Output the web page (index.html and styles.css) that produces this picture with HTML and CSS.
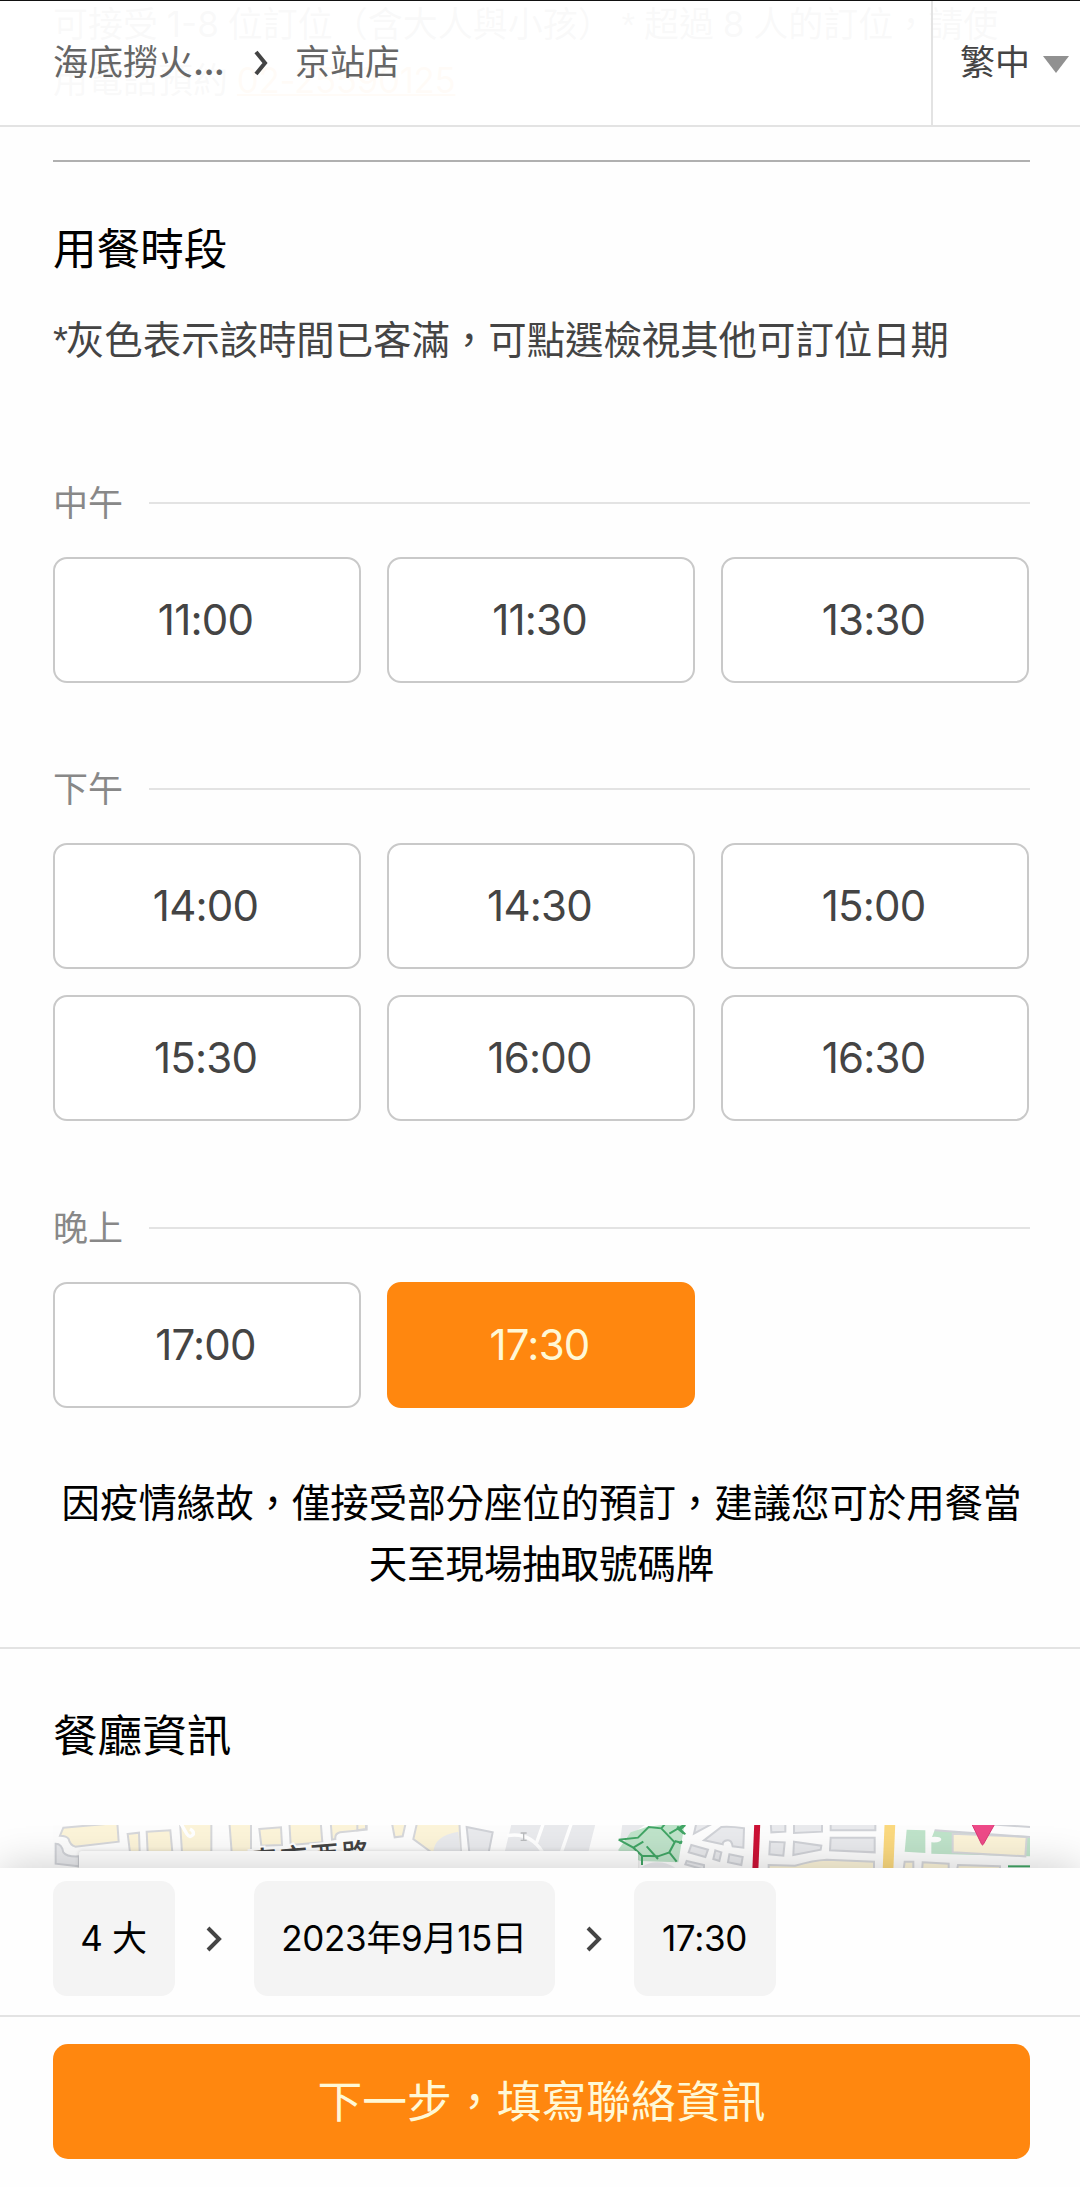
FILE: index.html
```html
<!DOCTYPE html>
<html lang="zh-Hant">
<head>
<meta charset="utf-8">
<title>海底撈火鍋 京站店</title>
<link rel="stylesheet" href="styles.css">
</head>
<body>
<div class="page">
  <p class="policy">可接受 1-8 位訂位（含大人與小孩） <span class="star">*</span> 超過 8 人的訂位，請使用電話預約 <a class="tel">02-25590125</a></p>
  <header class="topbar">
    <nav class="crumbs">
      <span class="crumb brand">海底撈火<b class="dots">...</b></span>
      <svg class="crumb-arrow" viewBox="0 0 14 26"><path d="M2 2L11 13L2 24"/></svg>
      <span class="crumb">京站店</span>
    </nav>
    <div class="lang"><span>繁中</span><i class="caret"></i></div>
  </header>
  <main class="content">
    <section class="times">
      <h2 class="title">用餐時段</h2>
      <p class="hint"><span class="star">*</span>灰色表示該時間已客滿，可點選檢視其他可訂位日期</p>
      <div class="period first">
        <h3 class="label"><span>中午</span></h3>
        <div class="slots"><button class="slot">11:00</button><button class="slot">11:30</button><button class="slot">13:30</button></div>
      </div>
      <div class="period">
        <h3 class="label"><span>下午</span></h3>
        <div class="slots"><button class="slot">14:00</button><button class="slot">14:30</button><button class="slot">15:00</button><button class="slot">15:30</button><button class="slot">16:00</button><button class="slot">16:30</button></div>
      </div>
      <div class="period last">
        <h3 class="label"><span>晚上</span></h3>
        <div class="slots"><button class="slot">17:00</button><button class="slot selected">17:30</button></div>
      </div>
      <p class="notice">因疫情緣故，僅接受部分座位的預訂，建議您可於用餐當天至現場抽取號碼牌</p>
    </section>
    <section class="info">
      <h2 class="title">餐廳資訊</h2>
      <div class="map">
        <svg class="tiles" viewBox="0 0 2931 129">
          <g transform="translate(-39 -30)">
            <g class="shop">
              <path d="M70 38L232 24L236 80L106 95Q90 90 86 72Q80 62 60 62Z"/>
              <path d="M263 57L297 53L299 112H270Z"/>
              <path d="M320 50L391 46L397 112H323Z"/>
              <path d="M420 20H514V112H426Z"/>
              <path d="M568 20H633V112H575Z"/>
              <path d="M658 42L723 37L726 90L664 92Z"/>
              <path d="M748 20H842L847 82L752 90Z"/>
              <path d="M872 20H980V44L900 52Q884 56 886 72L876 74Z"/>
            </g>
            <path class="block" d="M47 86Q66 86 70 112Q80 126 117 124V154L47 146Z"/>
            <path class="lane" d="M424 28L440 56Q450 72 460 58Q462 48 450 42"/>
            <text class="road-name" transform="translate(630 172) rotate(-4.6)">南京西路</text>
          </g>
          <g transform="translate(921 -30)">
            <g class="shop"><path d="M-8 20H18V42L-8 46Z"/><path d="M95 20H138L128 64L104 67Z"/><path d="M172 20H298L303 112H214L160 72Z"/></g>
            <path class="block plain" d="M295 50Q222 62 220 112H302Z"/>
            <path class="block" d="M320 36L398 52L386 112H328Z"/>
            <path class="block plain" d="M456 20H708L685 112H434Z"/>
            <path class="lane" d="M636 20L604 112M552 20L530 82M442 62Q510 50 548 112"/>
            <path class="walk" d="M482 54H500M482 76H500M491 54V76"/>
            <path class="block plain" d="M788 20H870L780 80Z"/>
            <path class="park" d="M812 52L860 36L975 20L955 142L840 138L774 106Z"/>
            <path class="trail" d="M776 74L834 68L866 36L904 40L944 82L928 112L894 124L846 122L820 98L776 74M820 98L850 80M860 94L894 132M904 40L914 28M928 56L972 30M950 38L972 56M944 78L966 84M928 112L950 140M846 122V150"/>
            <path class="block plain" d="M842 158Q890 126 946 158Z"/>
          </g>
          <g transform="translate(1881 -30)">
            <path class="trail" d="M-8 34L16 58M16 30L0 44M-2 86L6 78"/>
            <g class="block"><path d="M50 20H108L42 56Z"/><path d="M72 76L124 36Q155 34 192 40L190 98L158 94Q155 74 142 76Q128 78 128 88Z"/><path d="M34 90L84 104L76 126L26 112Z"/><path d="M106 106L124 112L118 138L100 132Z"/><path d="M148 118L188 126L184 150L144 142Z"/><path d="M20 138L72 150V164L16 148Z"/><path d="M272 20H316V50L274 52Z"/><path d="M342 20H426V50L342 54Z"/><path d="M452 20H586V46H452Z"/><path d="M270 80L314 82L310 122L268 118Z"/><path d="M342 80L424 92L422 104L340 120Z"/><path d="M452 68H584V112L450 106Z"/></g>
            <path class="metro" d="M232 20L226 165"/>
            <path class="artery" d="M630 20L624 165"/>
            <g class="shop"><path d="M266 150L345 152Q400 136 440 134L582 140V170H266Z"/><path d="M674 140H700V170H670Z"/><path d="M728 142L806 146V170H726Z"/><path d="M834 150L960 154V170H830Z"/></g>
            <path class="park" d="M680 44L736 46V114L674 110ZM764 46L1050 68V124L754 116V82Q784 84 784 72Q780 64 756 66Z"/>
            <path class="shop" d="M818 56L1040 66L1036 124L818 112Z"/>
            <path class="edge" d="M930 28L1050 36M764 46L1050 66"/>
            <path class="trail" d="M984 154H1050"/>
            <path class="pin" d="M874 24H946L910 88Q908 92 905 88Z"/>
          </g>
        </svg>
        <div class="map-card"></div>
      </div>
    </section>
  </main>
  <footer class="bottombar">
    <div class="summary">
      <span class="chip party">4 大</span>
      <svg class="step" viewBox="0 0 16 26"><path d="M2 2L13 13L2 24"/></svg>
      <span class="chip date">2023年9月15日</span>
      <svg class="step" viewBox="0 0 16 26"><path d="M2 2L13 13L2 24"/></svg>
      <span class="chip time">17:30</span>
    </div>
    <div class="action"><button class="next">下一步，填寫聯絡資訊</button></div>
  </footer>
</div>
</body>
</html>
```
FILE: styles.css
```css
* { box-sizing: border-box; margin: 0; padding: 0; }
body { background: #fefefe; font-family: Inter, "Noto Sans CJK TC", sans-serif; color: #000; }
.page { position: relative; display: flex; flex-direction: column; height: 2187px; overflow: hidden; }
.policy { position: absolute; left: 53px; top: -4px; width: 954px; font-size: 35px; line-height: 56px; word-spacing: -1px; color: #444; }
.star { font-family: "Liberation Sans", sans-serif; line-height: 1; }
.tel { color: #ff870f; text-decoration: underline; text-decoration-thickness: 2px; letter-spacing: -.4px; }
.topbar { position: relative; flex: none; display: flex; height: 127px; border-top: 1px solid #111; border-bottom: 2px solid #e3e3e3; background: rgba(255,255,255,.97); font-size: 35px; line-height: 52px; }
.crumbs { flex: 1; display: flex; align-items: flex-start; padding: 35px 0 0 53px; color: #666; }
.brand { width: 171px; white-space: nowrap; }
.dots { font-weight: 600; letter-spacing: -.8px; }
.crumb-arrow { width: 14px; height: 26px; margin: 14px 27px 0 30px; }
.crumb-arrow path, .step path { fill: none; stroke: #444; stroke-width: 4; }
.lang { width: 149px; display: flex; border-left: 2px solid #e3e3e3; padding: 35px 0 0 27px; color: #444; }
.caret { margin: 20px 0 0 13px; border: 13px solid transparent; border-top: 17px solid #919191; border-bottom: 0; height: 0; }
.times { margin: 33px 50px 0 53px; border-top: 2px solid #b0b0b0; }
.title { font-size: 44px; line-height: 60px; font-weight: 400; }
.times .title { margin-top: 58px; font-size: 43.6px; }
.info .title { font-size: 44.6px; }
.hint { margin-top: 31px; font-size: 38.4px; line-height: 58px; color: #444; white-space: nowrap; }
.hint .star { letter-spacing: -2px; }
.period { margin-top: 80px; }
.period.first { margin-top: 108px; }
.period.last { margin-top: 81px; }
.label { display: flex; align-items: center; gap: 26px; height: 52px; font-size: 35px; line-height: 52px; font-weight: 400; color: #888; }
.label span { padding-bottom: 1px; }
.label::after { content: ""; flex: 1; height: 2px; background: #e3e3e3; }
.slots { display: grid; grid-template-columns: repeat(3, 308px); gap: 26px; margin-top: 28px; }
.slot { height: 126px; padding: 0 3px 1px 0; border: 2px solid #c9c9c9; border-radius: 14px; background: #fff; color: #444; font: 400 42px Inter, sans-serif; letter-spacing: -.8px; }
.slot.selected { background: #ff870f; border-color: #ff870f; color: #fff8d6; }
.notice { margin-top: 65px; text-align: center; font-size: 38.4px; line-height: 61.4px; }
.info { margin-top: 51px; border-top: 2px solid #e3e3e3; padding: 57px 50px 0 53px; }
.map { position: relative; height: 260px; margin-top: 59px; overflow: hidden; background: #fdfdfd; }
.tiles { display: block; width: 977px; height: 43px; }
.map-card { position: absolute; left: 26px; top: 26px; width: 559px; height: 234px; border-radius: 3px; background: #fff; box-shadow: 0 0 4px rgba(0,0,0,.15); }
.shop { fill: #fcf4d9; stroke: #d6d7da; stroke-width: 6; }
.block { fill: #e9eaed; stroke: #d0d2d7; stroke-width: 6; }
.plain { stroke: none; }
.lane { fill: none; stroke: #fff; stroke-width: 10; }
.walk { fill: none; stroke: #b9bbbd; stroke-width: 4; }
.park { fill: #bfe3ca; }
.trail { fill: none; stroke: #41a565; stroke-width: 6; }
.metro { fill: none; stroke: #cc1236; stroke-width: 18; }
.artery { fill: none; stroke: #fbd97f; stroke-width: 32; }
.edge { fill: none; stroke: #d0d2d7; stroke-width: 6; }
.pin { fill: #ee4a88; stroke: #d93875; stroke-width: 3; }
.road-name { font: 500 84px "Noto Sans CJK TC", sans-serif; letter-spacing: 9px; fill: #444; stroke: #fff; stroke-width: 12; paint-order: stroke; }
.bottombar { position: absolute; left: 0; right: 0; bottom: 0; height: 319px; background: #fefefe; box-shadow: 0 0 40px rgba(0,0,0,.2); }
.summary { display: flex; align-items: center; height: 149px; padding: 0 53px 6px; border-bottom: 2px solid #e3e3e3; }
.chip { height: 115px; padding-right: 1px; border-radius: 14px; background: #f4f4f4; font-size: 35px; line-height: 115px; letter-spacing: -.3px; text-align: center; white-space: nowrap; }
.party { width: 122px; }
.date { width: 301px; }
.time { width: 142px; }
.step { width: 16px; height: 26px; margin: 0 32px 0 31px; }
.action { padding: 27px 50px 0 53px; }
.next { display: block; width: 100%; height: 115px; padding-bottom: 7px; border: 0; border-radius: 15px; background: #ff870f; color: #fff8d6; font: 400 44.8px "Noto Sans CJK TC", sans-serif; }
```
